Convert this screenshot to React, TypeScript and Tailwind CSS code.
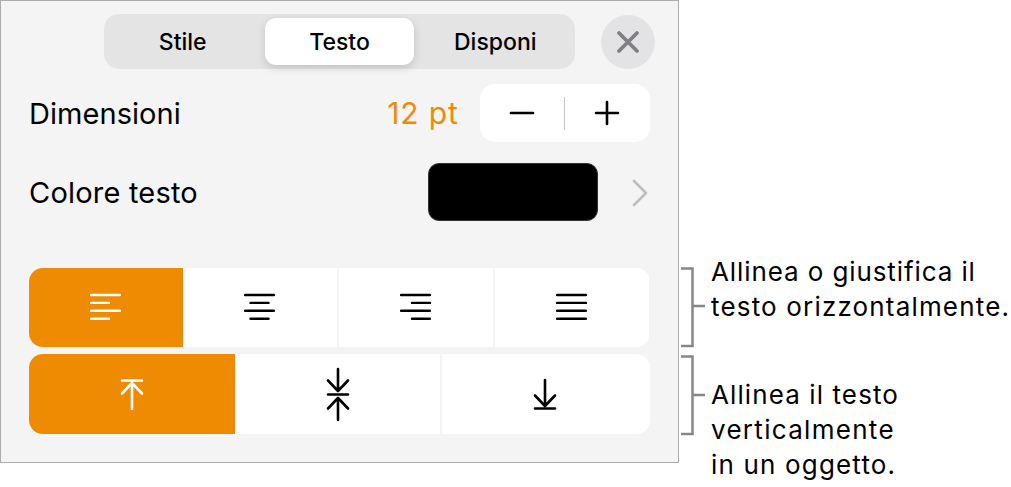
import React, { useState } from 'react';

const TABS = ['Stile', 'Testo', 'Disponi'];

// [x1, x2] of each of the four text lines
const HORIZONTAL = [
    { id: 'left', lines: [[1, 30], [1, 19], [1, 30], [1, 19]] },
    { id: 'center', lines: [[1, 30], [6.5, 24.5], [1, 30], [6.5, 24.5]] },
    { id: 'right', lines: [[1, 30], [12, 30], [1, 30], [12, 30]] },
    { id: 'justify', lines: [[1, 30], [1, 30], [1, 30], [1, 30]] },
];

const VERTICAL = [
    { id: 'top', d: 'M2 15.5H22M12 18V44M2 28.5L12 18L22 28.5' },
    { id: 'middle', d: 'M2 29.5H22M12 4V26M2 15.5L12 26L22 15.5M12 33V55M2 43.5L12 33L22 43.5' },
    { id: 'bottom', d: 'M2 43.5H22M12 15V41M2 30.5L12 41L22 30.5' },
];

interface BracketProps {
    tick: number;
}

const Bracket: React.FC<BracketProps> = ({ tick }) => (
    <svg width="26" height="81" viewBox="0 0 26 81" fill="none" stroke="#878787" strokeWidth="2.5" className="shrink-0">
        <path d={`M0 1.5H11.5V79H0M11.5 ${tick}H24`} />
    </svg>
);

export default function App() {
    const [tab, setTab] = useState('Testo');
    const [size, setSize] = useState(12);
    const [horizontal, setHorizontal] = useState('left');
    const [vertical, setVertical] = useState('top');

    return (
        <div className="flex h-[487px] w-[1011px] overflow-hidden bg-white font-['Inter',sans-serif] text-black">
            <div className="h-[463px] w-[679px] shrink-0 border border-[#acacac] bg-[#f4f4f4] pt-[13px] pr-[28.5px] pl-[28px]">
                <div className="flex items-center justify-end">
                    <div className="mr-[26px] flex h-[55px] w-[471px] items-center rounded-[15px] bg-[#e4e4e4] px-[4px] text-[23px] font-medium">
                        {TABS.map((name) => (
                            <button
                                key={name}
                                onClick={() => setTab(name)}
                                className={`h-[47px] rounded-[11px] pt-[1px] ${tab === name ? 'mx-[4px] w-[149px] shrink-0 bg-white shadow-[0_3px_8px_rgba(0,0,0,0.15)]' : 'flex-1 first:pr-[3px] last:pl-[2px]'}`}
                            >
                                {name}
                            </button>
                        ))}
                    </div>
                    <button className="-mr-[5px] flex size-[54px] items-center justify-center rounded-full bg-[#e3e3e5]">
                        <svg width="24" height="24" viewBox="0 0 24 24" fill="none" stroke="#808084" strokeWidth="3.8" strokeLinecap="round">
                            <path d="M3 3L21 21M21 3L3 21" />
                        </svg>
                    </button>
                </div>

                <div className="mt-[15px] flex h-[58px] items-center text-[29px]">
                    <span className="pt-[2px] tracking-[0.05px]">Dimensioni</span>
                    <span className="mr-[21px] ml-auto pt-px text-[30px] tracking-[0.8px] text-[#ef8b02]">{size} pt</span>
                    <div className="flex h-[58px] w-[170px] items-center rounded-[15px] bg-white">
                        <button className="flex h-full flex-1 items-center justify-center" onClick={() => setSize(size - 1)}>
                            <svg width="28" height="28" viewBox="0 0 28 28" stroke="currentColor" strokeWidth="2.6" strokeLinecap="round">
                                <path d="M3 14H25" />
                            </svg>
                        </button>
                        <div className="h-[33px] w-[1.5px] bg-[#c8c8cb]" />
                        <button className="flex h-full flex-1 items-center justify-center" onClick={() => setSize(size + 1)}>
                            <svg width="28" height="28" viewBox="0 0 28 28" stroke="currentColor" strokeWidth="2.6" strokeLinecap="round">
                                <path d="M3 14H25M14 3V25" />
                            </svg>
                        </button>
                    </div>
                </div>

                <div className="mt-[21px] flex h-[58px] items-center text-[29px]">
                    <span className="pt-[2px] tracking-[0.2px]">Colore testo</span>
                    <div className="ml-auto h-[58px] w-[170px] rounded-[11px] border border-[#333333] bg-black" />
                    <svg width="18" height="30" viewBox="0 0 18 30" fill="none" stroke="#bdbdbf" strokeWidth="2.6" strokeLinecap="round" strokeLinejoin="round" className="mt-[2px] ml-[34px]">
                        <path d="M2 3L14 15L2 27" />
                    </svg>
                </div>

                <div className="mt-[46.5px] flex h-[79.5px] overflow-hidden rounded-[14px]">
                    {HORIZONTAL.map(({ id, lines }, i) => (
                        <button
                            key={id}
                            onClick={() => setHorizontal(id)}
                            className={`flex items-center justify-center border-[#f4f4f4] ${i === 0 ? 'w-[153.5px]' : 'flex-1'} ${i > 1 ? 'border-l-2' : ''} ${horizontal === id ? 'bg-[#ef8b02] text-white' : 'bg-white'}`}
                        >
                            <svg width="31" height="28" viewBox="0 0 31 28" stroke="currentColor" strokeWidth="2.4" strokeLinecap="round" className="relative -left-[0.5px]">
                                {lines.map(([x1, x2], row) => (
                                    <path key={row} d={`M${x1} ${2 + row * 7.9}H${x2}`} />
                                ))}
                            </svg>
                        </button>
                    ))}
                </div>

                <div className="mt-[7px] flex h-[79.5px] overflow-hidden rounded-[14px]">
                    {VERTICAL.map(({ id, d }, i) => (
                        <button
                            key={id}
                            onClick={() => setVertical(id)}
                            className={`flex items-center justify-center border-[#f4f4f4] pt-[2px] ${i === 0 ? 'w-[206px]' : 'flex-1'} ${i > 1 ? 'border-l-2 pr-[2px]' : ''} ${vertical === id ? 'bg-[#ef8b02] text-white' : 'bg-white'}`}
                        >
                            <svg width="24" height="59" viewBox="0 0 24 59" fill="none" stroke="currentColor" strokeWidth="2.6" strokeLinecap="round" strokeLinejoin="round">
                                <path d={d} />
                            </svg>
                        </button>
                    ))}
                </div>
            </div>

            <div className="flex flex-col pt-[267px] pl-[2px] text-[26px] leading-[35px] tracking-[1.17px] whitespace-nowrap">
                <div className="flex h-[88px]">
                    <Bracket tick={39} />
                    <p className="-mt-[13px] ml-[4px]">
                        <span className="tracking-[0.9px]">Allinea o giustifica il</span>
                        <br />
                        testo orizzontalmente.
                    </p>
                </div>
                <div className="flex">
                    <Bracket tick={40} />
                    <p className="mt-[22px] ml-[4px]">
                        <span className="tracking-[1.1px]">Allinea il testo</span>
                        <br />
                        <span className="tracking-[1.3px]">verticalmente</span>
                        <br />
                        in un oggetto.
                    </p>
                </div>
            </div>
        </div>
    );
}
